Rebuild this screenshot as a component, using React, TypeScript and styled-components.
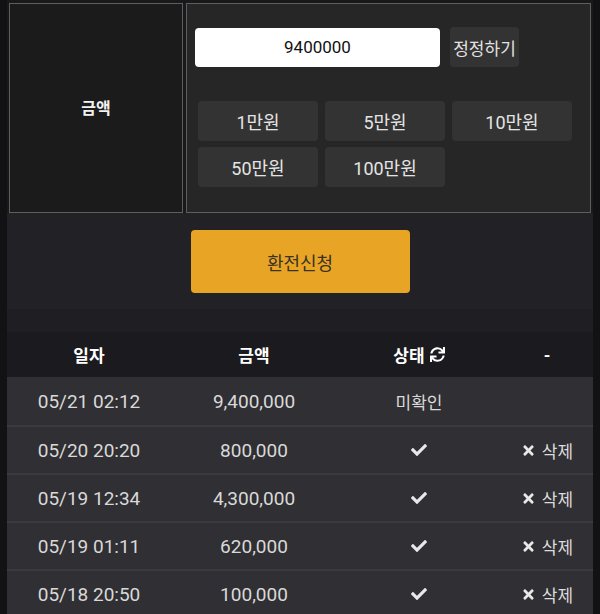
import React from "react";
import styled, { createGlobalStyle } from "styled-components";
import { FaCheck, FaTimes, FaSync } from "react-icons/fa";

const Global = createGlobalStyle`
  html, body { margin: 0; padding: 0; background: #121114; }
  body { font-family: Roboto, "Noto Sans CJK KR", "Noto Sans", sans-serif; }
  * { box-sizing: border-box; }
`;

const Page = styled.div`
  background: #121114;
  padding: 0 7px;
  min-height: 614px;
`;

const Column = styled.div`
  display: flex;
  flex-direction: column;
`;

const TopRow = styled.div`
  display: flex;
  gap: 3px;
  padding: 3px 2px 0;
  background: #19181b;
`;

const LabelPanel = styled.div`
  width: 174px;
  height: 210px;
  background: #1b1b1b;
  border: 1px solid #5e5e5e;
  display: flex;
  align-items: center;
  justify-content: center;
  color: #f2f2f2;
  font-weight: 700;
  font-size: 16px;
  padding-bottom: 2px;
`;

const FormPanel = styled.div`
  flex: 1;
  height: 210px;
  background: #262626;
  border: 1px solid #5e5e5e;
  padding: 23px 0 0 8px;
  display: flex;
  flex-direction: column;
`;

const InputRow = styled.div`
  display: flex;
  align-items: center;
  gap: 10px;
`;

const AmountInput = styled.input`
  width: 245px;
  height: 39px;
  border: none;
  border-radius: 4px;
  background: #ffffff;
  color: #111;
  font-family: Roboto, "Noto Sans CJK KR", sans-serif;
  font-size: 17px;
  text-align: center;
  outline: none;
`;

const FixButton = styled.button`
  width: 69px;
  height: 40px;
  border: none;
  border-radius: 4px;
  background: #333333;
  color: #e2e2e2;
  font-family: Roboto, "Noto Sans CJK KR", sans-serif;
  font-size: 17px;
  padding: 0;
  white-space: nowrap;
`;

const QuickGrid = styled.div`
  display: grid;
  grid-template-columns: repeat(3, 120px);
  grid-auto-rows: 40px;
  column-gap: 7px;
  row-gap: 6px;
  margin: 34px 0 0 3px;
`;

const QuickButton = styled.button`
  border: none;
  border-radius: 4px;
  background: #333333;
  color: #e4e4e4;
  font-family: Roboto, "Noto Sans CJK KR", sans-serif;
  font-size: 18px;
  padding: 0;
`;

const ActionBar = styled.div`
  height: 96px;
  background: #222226;
  display: flex;
  justify-content: center;
  padding-top: 17px;
`;

const ApplyButton = styled.button`
  width: 219px;
  height: 63px;
  border: none;
  border-radius: 4px;
  background: #e8a425;
  color: #3a3222;
  font-family: Roboto, "Noto Sans CJK KR", sans-serif;
  font-size: 18px;
  padding: 0;
`;

const Band = styled.div`
  height: 23px;
  background: #1f1e22;
`;

const cols = "164px 166px 164px 1fr";

const HeaderRow = styled.div`
  display: grid;
  grid-template-columns: ${cols};
  height: 45px;
  align-items: center;
  background: #1b1a1e;
  color: #ffffff;
  font-weight: 700;
  font-size: 17px;
`;

const Cell = styled.div`
  display: flex;
  align-items: center;
  justify-content: center;
  gap: 5px;
`;

const Row = styled.div<{ $first?: boolean }>`
  display: grid;
  grid-template-columns: ${cols};
  height: 48px;
  align-items: center;
  background: #302f33;
  border-top: ${(p) => (p.$first ? "0" : "2px solid #3b3a3e")};
  color: #d9d9d9;
  font-size: 19px;
`;

const Label = styled.span`
  font-size: 17px;
  color: #d9d9d9;
`;

const Del = styled.span`
  display: inline-flex;
  align-items: center;
  gap: 6px;
  color: #dcdcdc;
  font-size: 17px;
`;

const rows = [
  { d: "05/21 02:12", a: "9,400,000", s: "미확인", del: false },
  { d: "05/20 20:20", a: "800,000", s: "ok", del: true },
  { d: "05/19 12:34", a: "4,300,000", s: "ok", del: true },
  { d: "05/19 01:11", a: "620,000", s: "ok", del: true },
  { d: "05/18 20:50", a: "100,000", s: "ok", del: true },
];

export default function App() {
  return (
    <>
      <Global />
      <Page>
        <Column>
          <TopRow>
            <LabelPanel>금액</LabelPanel>
            <FormPanel>
              <InputRow>
                <AmountInput defaultValue="9400000" />
                <FixButton>정정하기</FixButton>
              </InputRow>
              <QuickGrid>
                {["1만원", "5만원", "10만원", "50만원", "100만원"].map((t) => (
                  <QuickButton key={t}>{t}</QuickButton>
                ))}
              </QuickGrid>
            </FormPanel>
          </TopRow>
          <ActionBar>
            <ApplyButton>환전신청</ApplyButton>
          </ActionBar>
          <Band />
          <HeaderRow>
            <Cell>일자</Cell>
            <Cell>금액</Cell>
            <Cell>
              상태 <FaSync size={15} />
            </Cell>
            <Cell>-</Cell>
          </HeaderRow>
          {rows.map((r, i) => (
            <Row key={r.d} $first={i === 0}>
              <Cell>{r.d}</Cell>
              <Cell>{r.a}</Cell>
              <Cell>
                {r.s === "ok" ? <FaCheck size={16} color="#e8e8e8" /> : <Label>{r.s}</Label>}
              </Cell>
              <Cell>
                {r.del && (
                  <Del>
                    <FaTimes size={15} color="#e8e8e8" />
                    삭제
                  </Del>
                )}
              </Cell>
            </Row>
          ))}
        </Column>
      </Page>
    </>
  );
}
